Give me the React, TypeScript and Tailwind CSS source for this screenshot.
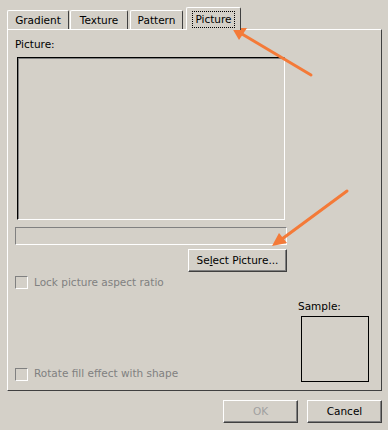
import React from 'react';

const font = { fontFamily: '"DejaVu Sans", "Liberation Sans", sans-serif' };

function Tab({ label, active, className }: { label: string; active?: boolean; className?: string }) {
  if (active) {
    return (
      <div className={`relative z-10 -mb-px flex h-[23px] items-center justify-center rounded-t-[2px] border-l border-t border-r border-white border-r-[#404040] bg-[#d4d0c8] ${className ?? ''}`}>
        <span className="border border-dotted border-black px-[2px] leading-[15px]">{label}</span>
      </div>
    );
  }
  return (
    <div className={`flex h-[19px] items-center justify-center rounded-t-[2px] border-l border-t border-r border-white border-r-[#404040] bg-[#d4d0c8] pt-[1px] ${className ?? ''}`}>
      {label}
    </div>
  );
}

function Check({ label }: { label: string }) {
  return (
    <div className="flex items-center gap-[6px] text-[#808080]">
      <div className="h-[13px] w-[13px] border border-[#808080] border-b-white border-r-white" />
      <span>{label}</span>
    </div>
  );
}

function Button({ children, disabled, className }: { children: React.ReactNode; disabled?: boolean; className?: string }) {
  return (
    <div
      className={`flex items-center justify-center border border-white border-b-[#404040] border-r-[#404040] shadow-[inset_-1px_-1px_0_#808080] ${disabled ? 'text-[#a0a0a0]' : 'text-black'} ${className ?? ''}`}
    >
      {children}
    </div>
  );
}

export default function App() {
  return (
    <div className="relative h-[430px] w-[388px] overflow-hidden bg-[#d4d0c8] text-[10.5px] text-black" style={font}>
      <div className="mt-[7px] flex h-[22px] items-end pl-[7px]">
        <Tab label="Gradient" className="w-[62px]" />
        <Tab label="Texture" className="ml-[1px] w-[58px]" />
        <Tab label="Pattern" className="ml-[2px] w-[53px]" />
        <Tab label="Picture" active className="ml-[3px] w-[55px]" />
      </div>

      <div className="mx-[7px] flex h-[362px] w-[375px] flex-col border border-white border-b-[#404040] border-r-[#404040] px-[7px] pb-[8px] pt-[8px]">
        <div className="leading-[13px]">Picture:</div>
        <div className="ml-[2px] mt-[6px] h-[163px] w-[268px] border border-black border-b-white border-r-white shadow-[inset_1px_1px_0_#808080]" />
        <div className="mt-[7px] h-[18px] w-[272px] border border-[#808080] border-b-white border-r-white" />
        <Button className="ml-[173px] mt-[4px] h-[23px] w-[99px]">
          <span>
            Se<span className="underline">l</span>ect Picture...
          </span>
        </Button>
        <div className="mt-[3px]">
          <Check label="Lock picture aspect ratio" />
        </div>
        <div className="mt-auto flex items-end justify-between">
          <Check label="Rotate fill effect with shape" />
          <div className="mr-[5px] flex flex-col">
            <div className="mb-[3px] leading-[13px]">Sample:</div>
            <div className="ml-[3px] h-[66px] w-[68px] border border-black" />
          </div>
        </div>
      </div>

      <div className="mt-[9px] flex justify-end gap-[9px] pr-[6px]">
        <Button disabled className="h-[23px] w-[75px]">OK</Button>
        <Button className="h-[23px] w-[75px]">Cancel</Button>
      </div>

      <svg className="pointer-events-none absolute inset-0" width="388" height="430">
        <line x1="311" y1="75" x2="242" y2="34" stroke="#f47a38" strokeWidth="3" strokeLinecap="round" />
        <polygon points="232,28 247,28 239,40" fill="#f47a38" />
        <line x1="347" y1="191" x2="282" y2="239" stroke="#f47a38" strokeWidth="3" strokeLinecap="round" />
        <polygon points="272,246 279,233 287,243" fill="#f47a38" />
      </svg>
    </div>
  );
}
